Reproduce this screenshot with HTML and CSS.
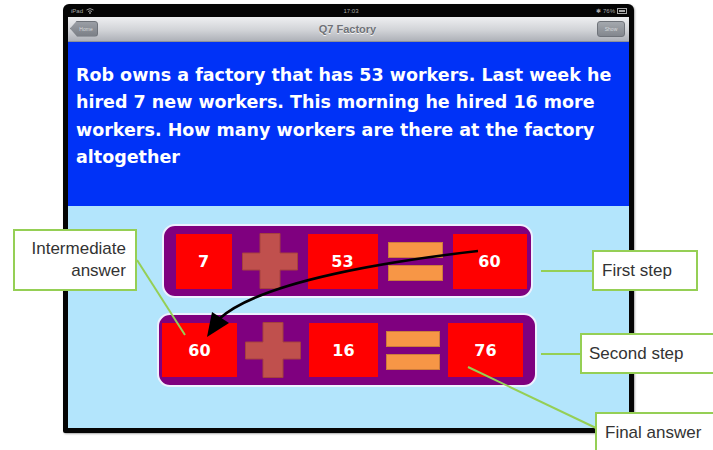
FILE: index.html
```html
<!DOCTYPE html>
<html lang="en">
<head>
    <meta charset="UTF-8">
    <meta name="viewport" content="width=device-width, initial-scale=1.0">
    <title>Q7 Factory</title>
    <link rel="stylesheet" href="styles.css">
</head>
<body>

    <div class="device">
        <div class="status">
            <span class="status-left">iPad
                <svg class="wifi" width="8" height="6" viewBox="0 0 8 6">
                    <path d="M0.5 2 Q4 -0.8 7.5 2" fill="none" stroke="#9a9a9a" stroke-width="1"/>
                    <path d="M2 3.5 Q4 2 6 3.5" fill="none" stroke="#9a9a9a" stroke-width="1"/>
                    <circle cx="4" cy="5" r="0.9" fill="#9a9a9a"/>
                </svg>
            </span>
            <span class="status-time">17:03</span>
            <span class="status-right">&#x2731; 76% <span class="battery"></span></span>
        </div>

        <div class="navbar">
            <span class="nav-btn back">Home</span>
            <span class="nav-title">Q7 Factory</span>
            <span class="nav-btn show">Show</span>
        </div>

        <div class="question">
            Rob owns a factory that has 53 workers. Last week he hired 7 new workers. This morning he hired 16 more workers. How many workers are there at the factory altogether
        </div>

        <div class="workspace">
            <div class="step step-one">
                <div class="num w56">7</div>
                <svg class="plus" viewBox="0 0 56 56">
                    <polygon points="18,0.5 38,0.5 38,20 55.5,20 55.5,37 38,37 38,55.5 18,55.5 18,37 0.5,37 0.5,20 18,20"/>
                </svg>
                <div class="num w70">53</div>
                <div class="equals w55"><span></span><span></span></div>
                <div class="num w74">60</div>
            </div>

            <div class="step step-two">
                <div class="num w75">60</div>
                <svg class="plus" viewBox="0 0 56 56">
                    <polygon points="18,0.5 38,0.5 38,20 55.5,20 55.5,37 38,37 38,55.5 18,55.5 18,37 0.5,37 0.5,20 18,20"/>
                </svg>
                <div class="num w69">16</div>
                <div class="equals w54"><span></span><span></span></div>
                <div class="num w75">76</div>
            </div>
        </div>
    </div>

    <!-- annotations drawn over the screenshot -->
    <svg class="overlay" width="713" height="450" viewBox="0 0 713 450">
        <g stroke="#95cf55" stroke-width="2" fill="none">
            <line x1="137" y1="260" x2="185" y2="335"/>
            <line x1="541" y1="271" x2="593" y2="271"/>
            <line x1="541" y1="354" x2="581" y2="354"/>
            <line x1="468" y1="367" x2="596" y2="428"/>
        </g>
        <path d="M478 251 C400 260 262 280 219 319" fill="none" stroke="#000" stroke-width="2.5"/>
        <polygon points="212,312 229,323 207,337" fill="#000"/>
    </svg>

    <div class="callout intermediate">Intermediate<br>answer</div>
    <div class="callout first">First step</div>
    <div class="callout second">Second step</div>
    <div class="callout final">Final answer</div>

</body>
</html>
```

FILE: styles.css
```css
body {
    margin: 0;
    width: 713px;
    height: 450px;
    position: relative;
    overflow: hidden;
    background-color: #ffffff;
    font-family: "Liberation Sans", Arial, sans-serif;
}
.device {
    box-sizing: border-box;
    width: 571px;
    height: 429px;
    margin: 4px 0 0 63px;
    padding: 0 5px 5px 5px;
    background-color: #050505;
    border-radius: 6px 6px 2px 2px;
    display: flex;
    flex-direction: column;
    box-shadow: 1px 1px 2px rgba(0, 0, 0, 0.35);
}
.status {
    height: 13px;
    display: grid;
    grid-template-columns: 1fr auto 1fr;
    align-items: center;
    font-size: 6px;
    color: #a8a8a8;
    padding: 0 2px 0 3px;
}
.status-left {
    display: flex;
    align-items: center;
    gap: 3px;
}
.status-time {
    padding-left: 4px;
}
.status-right {
    justify-self: end;
    display: flex;
    align-items: center;
    gap: 2px;
}
.battery {
    width: 8px;
    height: 4px;
    border: 1px solid #a8a8a8;
    background-color: #a8a8a8;
    box-shadow: inset 0 0 0 1px #050505;
}
.navbar {
    height: 25px;
    box-sizing: border-box;
    display: grid;
    grid-template-columns: 1fr auto 1fr;
    align-items: center;
    padding: 0 4px 1px 2px;
    background: linear-gradient(#eeeff1, #d1d3d7 55%, #aeb1b8);
    border-bottom: 1px solid #8e9199;
}
.nav-title {
    font-size: 11px;
    font-weight: bold;
    color: #6f7278;
    text-shadow: 0 1px 0 #f4f4f4;
}
.nav-btn {
    height: 16px;
    width: 28px;
    box-sizing: border-box;
    display: flex;
    align-items: center;
    justify-content: center;
    font-size: 5px;
    color: #d8dade;
    background: linear-gradient(#a4a8ae, #83878e);
    border: 1px solid #6f737a;
    border-radius: 3px;
}
.nav-btn.back {
    padding-left: 4px;
    background: linear-gradient(#9a9ea5, #7b7f86);
    clip-path: polygon(7px 0, 100% 0, 100% 100%, 7px 100%, 0 50%);
}
.nav-btn.show {
    justify-self: end;
}
.question {
    height: 164px;
    box-sizing: border-box;
    padding: 20px 8px 0 8px;
    background-color: #0032f7;
    color: #ffffff;
    font-family: "DejaVu Sans", Verdana, sans-serif;
    font-weight: bold;
    font-size: 17.5px;
    line-height: 27.3px;
}
.workspace {
    flex: 1;
    background-color: #b3e5fc;
    display: flex;
    flex-direction: column;
    align-items: center;
    padding: 18px 3px 0 0;
    gap: 15px;
}
.step {
    box-sizing: border-box;
    height: 74px;
    display: flex;
    align-items: center;
    justify-content: space-between;
    background-color: #7f007f;
    border: 2px solid #eef0ff;
    border-radius: 13px;
}
.step-one {
    width: 371px;
    padding: 0 4px 0 12px;
}
.step-two {
    width: 380px;
    padding: 0 12px 0 3px;
}
.num {
    height: 55px;
    display: flex;
    align-items: center;
    justify-content: center;
    background-color: #ff0000;
    color: #ffffff;
    font-family: "DejaVu Sans", Verdana, sans-serif;
    font-weight: bold;
    font-size: 16px;
}
.step-two .num {
    height: 54px;
}
.w56 { width: 56px; }
.w69 { width: 69px; }
.w70 { width: 70px; }
.w74 { width: 74px; }
.w75 { width: 75px; }
.plus {
    width: 56px;
    height: 56px;
}
.plus polygon {
    fill: #c0504d;
    stroke: #a5403e;
    stroke-width: 1;
}
.equals {
    height: 55px;
    display: flex;
    flex-direction: column;
    justify-content: center;
    gap: 7px;
}
.w55 { width: 55px; }
.w54 { width: 54px; }
.equals span {
    height: 16px;
    background-color: #f79646;
    border: 1px solid #cc7a3c;
    box-sizing: border-box;
}
.overlay {
    position: absolute;
    top: 0;
    left: 0;
    pointer-events: none;
}
.callout {
    position: absolute;
    box-sizing: border-box;
    background-color: #ffffff;
    border: 2px solid #95cf55;
    color: #333333;
    font-size: 17px;
    line-height: 22px;
    display: flex;
    align-items: center;
}
.intermediate {
    left: 13px;
    top: 229px;
    width: 124px;
    height: 62px;
    justify-content: flex-end;
    text-align: right;
    padding-right: 9px;
}
.first {
    left: 592px;
    top: 250px;
    width: 106px;
    height: 41px;
    padding-left: 8px;
}
.second {
    left: 580px;
    top: 333px;
    width: 140px;
    height: 41px;
    padding-left: 7px;
}
.final {
    left: 595px;
    top: 412px;
    width: 140px;
    height: 44px;
    padding-left: 8px;
    align-items: flex-start;
    padding-top: 8px;
}
```
